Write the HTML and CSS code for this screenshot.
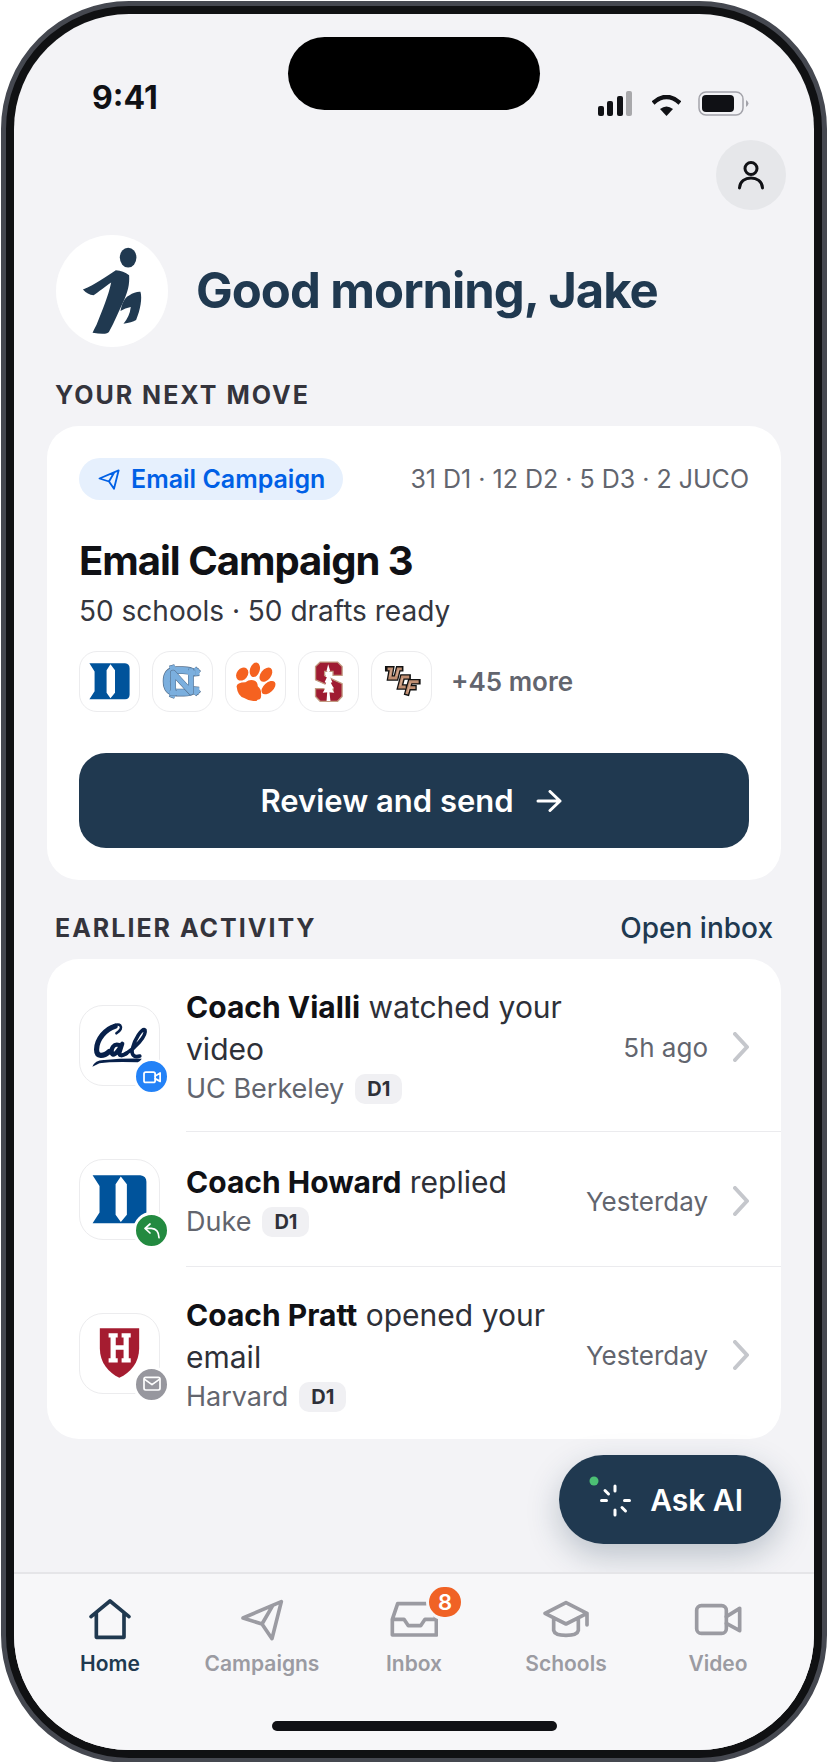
FILE: index.html
```html
<!DOCTYPE html>
<html lang="en">
<head>
<meta charset="utf-8">
<meta name="viewport" content="width=device-width, initial-scale=1">
<title>Home</title>
<link rel="stylesheet" href="styles.css">
</head>
<body>
<svg class="defs" aria-hidden="true">
  <symbol id="i-plane" viewBox="0 0 144 144"><path d="M15 69 130 20 102 131 72 87ZM72 87 104 32"/></symbol>
  <symbol id="i-video" viewBox="0 0 144 144"><rect x="8" y="32" width="89" height="83" rx="14"/><path d="M97 65 137 40V107L97 85"/></symbol>
  <symbol id="i-chevron" viewBox="0 0 16 30"><path d="M2 2 14 15 2 28"/></symbol>
  <symbol id="l-duke" viewBox="0 0 182 182"><path fill="#00539b" fill-rule="evenodd" d="M29 35H139Q153 37 153 50V132Q153 145 139 146H29L45 121V60ZM94 38 82 56V126L94 143 108 126V56Z"/></symbol>
</svg>
<div class="phone">
  <div class="screen">
    <header class="status">
      <span class="time">9:41</span>
      <span class="island"></span>
      <span class="indicators">
        <svg class="signal" viewBox="0 0 34 25" aria-hidden="true"><g fill="#101115"><rect y="15" width="6" height="10" rx="2"/><rect x="9" y="10" width="6" height="15" rx="2"/><rect x="19" y="5" width="6" height="20" rx="2"/></g><rect x="28" width="6" height="25" rx="2" fill="#a8a8ab"/></svg>
        <svg class="wifi" viewBox="0 0 29 21" aria-hidden="true"><path d="M1 8Q14.500-4 28 8" fill="none" stroke="#101115" stroke-width="4.500"/><path d="M8 14Q14.500 9 21 14L14.500 21Z" fill="#101115"/></svg>
        <svg class="battery" viewBox="0 0 51 25" aria-hidden="true"><rect x="1" y="1" width="44" height="23" rx="7" fill="none" stroke="#a3a3aa" stroke-width="1.500"/><rect x="4" y="4" width="32" height="17" rx="4" fill="#101115"/><path d="M48 9Q53 12.500 48 16Z" fill="#a3a3aa"/></svg>
      </span>
    </header>

    <div class="topbar">
      <button class="profile" aria-label="Profile">
        <svg viewBox="0 0 28 30" aria-hidden="true"><circle cx="14" cy="8.500" r="6"/><path d="M2.500 28C3 14.500 25 14.500 25.500 28"/></svg>
      </button>
    </div>

    <main>
      <div class="greeting">
        <span class="avatar"><svg viewBox="0 0 337 337" aria-hidden="true"><ellipse cx="217" cy="68" rx="25" ry="30"/><path d="M81 164C120 148 150 125 180 106Q203 107 220 121C222 150 215 172 206 193C188 230 176 262 160 290Q155 302 110 294Q114 285 122 270C140 225 157 185 166 143C148 155 128 172 113 181Q95 180 81 164Z"/><path d="M194 229C198 205 208 187 220 182Q238 170 254 171C260 190 254 225 241 256Q228 264 203 267Q222 245 225 217Q208 220 194 229Z"/></svg></span>
        <h1>Good morning, Jake</h1>
      </div>

      <div class="section-head"><h2>YOUR NEXT MOVE</h2></div>
      <section class="card campaign">
        <div class="campaign-top">
          <span class="pill"><svg class="line" aria-hidden="true"><use href="#i-plane"/></svg>Email Campaign</span>
          <span class="divisions">31 D1 · 12 D2 · 5 D3 · 2 JUCO</span>
        </div>
        <h3>Email Campaign 3</h3>
        <p class="summary">50 schools · 50 drafts ready</p>
        <div class="schools">
          <span class="tile"><svg role="img" aria-label="Duke"><use href="#l-duke"/></svg></span>
          <span class="tile"><svg viewBox="0 0 182 182" role="img" aria-label="North Carolina">
            <g fill="none" stroke-linejoin="round">
              <path stroke="#526b87" stroke-width="24" d="M142 62 125 64Q115 56 92 56H72Q42 58 42 90Q42 122 72 125H95Q115 125 125 118L142 119"/>
              <path stroke="#526b87" stroke-width="18" d="M127 51 142 65M127 130 142 116M52 51 68 46M52 130 68 136"/>
              <path stroke="#7bafde" stroke-width="20" d="M142 62 125 64Q115 56 92 56H72Q42 58 42 90Q42 122 72 125H95Q115 125 125 118L142 119"/>
              <path stroke="#7bafde" stroke-width="14" d="M127 51 142 65M127 130 142 116M52 51 68 46M52 130 68 136"/>
              <path stroke="#526b87" stroke-width="18" d="M62 134V64L117 124V52M108 64H130M52 126H74"/>
              <path stroke="#7bafde" stroke-width="15" d="M62 134V64L117 124V52M108 64H130M52 126H74"/>
            </g></svg></span>
          <span class="tile"><svg viewBox="0 0 182 182" role="img" aria-label="Clemson"><g fill="#f56220"><ellipse cx="50" cy="68" rx="17" ry="22" transform="rotate(38 50 68)"/><ellipse cx="89" cy="55" rx="15" ry="23" transform="rotate(18 89 55)"/><ellipse cx="123" cy="70" rx="16" ry="25" transform="rotate(38 123 70)"/><ellipse cx="131" cy="110" rx="15" ry="26" transform="rotate(48 131 110)"/><path d="M33 108Q30 94 60 93Q72 84 84 87Q98 90 98 106Q110 116 108 130Q110 140 104 146Q96 146 94 151H84Q68 150 56 142Q36 136 33 108Z"/></g></svg></span>
          <span class="tile"><svg viewBox="0 0 182 182" role="img" aria-label="Stanford"><path d="M65 31H119L133 45V72H105V60H79V73L133 98V137L119 152H65L51 137V113H79V122H105V110L51 86V45Z" fill="#9f1b32" stroke="#c19a80" stroke-width="4"/><path d="M90 38 96 58 93 60 100 76 96 78 103 93 98 95 107 112 100 113 109 126 94 124 97 151H85L87 124 73 126 81 113 76 112 84 95 79 93 86 78 82 76 88 60 85 58Z" fill="#fff"/></svg></span>
          <span class="tile"><svg viewBox="0 0 182 182" role="img" aria-label="UCF"><g fill="none" stroke-linejoin="miter"><path stroke="#111" stroke-width="17" d="M40 52H60L55 80H74L81 52H97M120 77H94L86 108H108M150 92H118L106 134M114 110H138"/><path stroke="#c08f73" stroke-width="9" d="M48 52H60L55 80H74L81 52H92M115 77H94L86 108H104M144 92H118L107 130M114 110H134"/><path stroke="#e8c4ac" stroke-width="2" d="M60 54 55 76M82 54 76 74M94 80 87 104M118 95 111 124"/></g></svg></span>
          <span class="more">+45 more</span>
        </div>
        <button class="review">Review and send<svg viewBox="0 0 26 22" aria-hidden="true"><path d="M2 11H24M14 1.500 24 11 14 20.500"/></svg></button>
      </section>

      <div class="section-head"><h2>EARLIER ACTIVITY</h2><a href="#inbox">Open inbox</a></div>
      <ul class="card activity">
        <li>
          <span class="logo"><svg viewBox="0 0 243 243" role="img" aria-label="Cal"><g fill="none" stroke="#07204a" stroke-linecap="round"><path stroke-width="8" d="M112 84Q132 70 124 60Q118 54 105 60"/><path stroke-width="16" d="M108 62C78 70 51 104 51 134C51 158 72 156 90 140"/><path stroke-width="13" d="M120 120C104 114 94 132 98 146Q104 158 122 130M130 116 121 144Q122 158 142 146"/><path stroke-width="11" d="M142 146C166 132 206 92 200 74C190 66 168 104 162 128C156 150 166 160 184 154"/></g><path fill="#07204a" d="M38 187Q46 165 75 166 130 161 190 162 185 170 178 173 100 170 60 176Z"/></svg>
            <span class="badge badge-video"><svg class="line" aria-hidden="true"><use href="#i-video"/></svg></span></span>
          <div class="row">
            <div class="text"><p><b>Coach Vialli</b> watched your video</p><span class="school">UC Berkeley <span class="chip">D1</span></span></div>
            <time>5h ago</time><svg class="chevron" aria-hidden="true"><use href="#i-chevron"/></svg>
          </div>
        </li>
        <li>
          <span class="logo"><svg role="img" aria-label="Duke"><use href="#l-duke"/></svg>
            <span class="badge badge-reply"><svg class="line" viewBox="0 0 60 60" aria-hidden="true"><path d="M24 9 9 22 24 36M10 22H28Q50 23 51 50"/></svg></span></span>
          <div class="row">
            <div class="text"><p><b>Coach Howard</b> replied</p><span class="school">Duke <span class="chip">D1</span></span></div>
            <time>Yesterday</time><svg class="chevron" aria-hidden="true"><use href="#i-chevron"/></svg>
          </div>
        </li>
        <li>
          <span class="logo"><svg viewBox="0 0 243 243" role="img" aria-label="Harvard"><path fill="#a51c30" d="M61 44H182V105C182 150 155 180 121 196C88 180 61 150 61 105Z"/><path fill="#fff" d="M88 59H116V72H110V96H134V72H128V59H156V72H150V136H156V149H128V136H134V110H110V136H116V149H88V136H94V72H88Z"/></svg>
            <span class="badge badge-mail"><svg class="line" viewBox="0 0 60 60" aria-hidden="true"><rect x="6" y="10" width="48" height="38" rx="5"/><path d="M8 16 30 32 52 16"/></svg></span></span>
          <div class="row">
            <div class="text"><p><b>Coach Pratt</b> opened your email</p><span class="school">Harvard <span class="chip">D1</span></span></div>
            <time>Yesterday</time><svg class="chevron" aria-hidden="true"><use href="#i-chevron"/></svg>
          </div>
        </li>
      </ul>
    </main>

    <div class="ask-wrap">
      <button class="ask"><svg viewBox="0 0 44 44" aria-hidden="true"><circle cx="5" cy="7" r="4.500" fill="#4cc074"/><path d="M26 12V17M26 36V41M12.500 26.500H17.500M35.500 26.500H40.500M16 16.500 19.500 20M33 33.500 36.500 37"/></svg>Ask AI</button>
    </div>

    <nav class="tabs">
      <a class="tab active" href="#home"><svg class="line" viewBox="0 0 144 144" aria-hidden="true"><path d="M15 65 72 18 129 65M31 55V127H114V55"/></svg>Home</a>
      <a class="tab" href="#campaigns"><svg class="line" aria-hidden="true"><use href="#i-plane"/></svg>Campaigns</a>
      <a class="tab" href="#inbox"><span class="tab-icon"><svg class="line" viewBox="0 0 144 144" aria-hidden="true"><path d="M7 73V120H139V73H105L92 92H55L42 73ZM7 73 23 26H123L139 73"/></svg><span class="count">8</span></span>Inbox</a>
      <a class="tab" href="#schools"><svg class="line" viewBox="0 0 144 144" aria-hidden="true"><path d="M72 23 135 55 72 87 9 55ZM35 68V106Q38 121 72 121 106 121 109 106V68M135 55V90"/></svg>Schools</a>
      <a class="tab" href="#video"><svg class="line" aria-hidden="true"><use href="#i-video"/></svg>Video</a>
      <span class="home-bar"></span>
    </nav>
  </div>
</div>
</body>
</html>
```
FILE: styles.css
```css
* { box-sizing: border-box; }
body {
  margin: 0;
  padding: 1px;
  background: #fff;
  color: #101115;
  font-family: Inter, "Liberation Sans", sans-serif;
}
h1, h2, h3, p, ul { margin: 0; padding: 0; }
button { border: 0; font: inherit; cursor: pointer; }
a { text-decoration: none; }
svg { display: block; flex: none; }
.defs { position: absolute; width: 0; height: 0; }
.line { fill: none; stroke: currentColor; stroke-width: 11; stroke-linecap: round; stroke-linejoin: round; }

.phone {
  display: flex;
  min-height: calc(100vh - 2px);
  border: 5px solid #454850;
  border-radius: 128px;
  background: #101113;
  padding: 8px;
}
.screen {
  flex: 1;
  min-width: 0;
  display: flex;
  flex-direction: column;
  border-radius: 115px;
  overflow: hidden;
  background: #f3f3f6;
}

.status {
  display: grid;
  grid-template-columns: 1fr 252px 1fr;
  align-items: end;
  height: 102px;
  padding-top: 23px;
}
.time { padding-left: 78px; font-size: 32px; line-height: 36px; font-weight: 700; }
.island { align-self: start; height: 73px; border-radius: 37px; background: #000; }
.indicators { display: flex; justify-content: flex-end; align-items: flex-end; padding-right: 65px; }
.signal { width: 34px; height: 25px; margin-right: 20px; }
.wifi { width: 29px; height: 21px; margin-right: 17px; }
.battery { width: 51px; height: 25px; }

.topbar { display: flex; justify-content: flex-end; padding: 24px 28px 0; }
.profile {
  display: grid;
  place-items: center;
  width: 70px;
  height: 70px;
  padding: 0;
  border-radius: 50%;
  background: #e6e7ea;
}
.profile svg { width: 28px; height: 30px; fill: none; stroke: #101115; stroke-width: 3; stroke-linecap: round; }

main { padding: 25px 33px 16px; }
.greeting { display: flex; align-items: center; gap: 28px; padding-left: 9px; }
.avatar { width: 112px; height: 112px; border-radius: 50%; background: #fff; fill: #203950; }
.greeting h1 { font-size: 49px; line-height: 56px; font-weight: 700; letter-spacing: -1px; color: #203950; }

.section-head {
  display: flex;
  justify-content: space-between;
  align-items: center;
  margin: 32px 8px 15px;
  line-height: 32px;
}
.section-head h2 { font-size: 25px; font-weight: 700; letter-spacing: 2px; color: #34343c; }
.section-head a { font-size: 28px; font-weight: 500; color: #203950; }

.card { border-radius: 32px; background: #fff; }
.campaign { padding: 32px; }
.campaign-top { display: flex; justify-content: space-between; align-items: center; gap: 16px; }
.pill {
  display: flex;
  align-items: center;
  gap: 10px;
  height: 42px;
  padding: 0 18px;
  border-radius: 21px;
  background: #e6f0fd;
  color: #0060e6;
  font-size: 25px;
  font-weight: 600;
  white-space: nowrap;
}
.pill svg { width: 24px; height: 24px; }
.divisions { font-size: 25px; color: #62656e; white-space: nowrap; }
.campaign h3 { margin-top: 37px; font-size: 40px; line-height: 48px; font-weight: 700; letter-spacing: -1px; }
.summary { margin-top: 8px; font-size: 28px; line-height: 36px; color: #34363e; }
.schools { display: flex; align-items: center; gap: 12px; margin-top: 22px; }
.tile { width: 61px; height: 61px; border: 1px solid #ececee; border-radius: 18px; }
.tile svg { width: 100%; height: 100%; }
.more { margin-left: 7px; font-size: 26px; font-weight: 600; color: #62656e; }
.review {
  display: flex;
  justify-content: center;
  align-items: center;
  gap: 22px;
  width: 100%;
  height: 95px;
  margin-top: 41px;
  padding: 0 12px 0 6px;
  border-radius: 27px;
  background: #203950;
  color: #fff;
  font-size: 31px;
  font-weight: 600;
}
.review svg { width: 26px; height: 22px; fill: none; stroke: #fff; stroke-width: 3; stroke-linecap: round; stroke-linejoin: round; }

.activity { list-style: none; }
.activity li { display: flex; align-items: center; gap: 26px; padding-left: 32px; }
.logo { position: relative; flex: none; width: 81px; height: 81px; border: 1px solid #ececee; border-radius: 24px; }
.logo > svg { width: 100%; height: 100%; }
.badge {
  position: absolute;
  right: -11px;
  bottom: -10px;
  display: grid;
  place-items: center;
  width: 37px;
  height: 37px;
  border: 3px solid #fff;
  border-radius: 50%;
  color: #fff;
}
.badge svg { width: 20px; height: 20px; stroke-width: 5; }
.badge-video { background: #2382f7; }
.badge-video svg { width: 18px; height: 18px; stroke-width: 14; }
.badge-reply { background: #238a40; }
.badge-mail { background: #97979e; }
.row {
  flex: 1;
  min-width: 0;
  min-height: 135px;
  display: flex;
  align-items: center;
  padding: 27px 32px 23px 0;
  border-bottom: 1px solid #ebebee;
}
li:last-child .row { border-bottom: 0; }
.text { flex: 1; min-width: 0; }
.text p { font-size: 30px; line-height: 42px; color: #2e3038; }
.text b { font-weight: 700; color: #101115; }
.school { display: flex; align-items: center; gap: 11px; line-height: 38px; font-size: 27px; color: #62656e; }
.chip { padding: 0 12px; border-radius: 10px; background: #f0f0f3; font-size: 20px; line-height: 30px; font-weight: 700; color: #2e3038; }
.row time { margin-left: 12px; font-size: 26px; color: #62656e; white-space: nowrap; }
.chevron { width: 16px; height: 30px; margin-left: 25px; fill: none; stroke: #c5c7cc; stroke-width: 4; stroke-linecap: round; stroke-linejoin: round; }

.ask-wrap { display: flex; justify-content: flex-end; margin-top: auto; padding: 0 33px 28px; }
.ask {
  display: flex;
  align-items: center;
  gap: 17px;
  height: 89px;
  padding: 0 38px 0 30px;
  border-radius: 45px;
  background: #203950;
  box-shadow: 0 12px 32px rgba(32, 57, 80, .26);
  color: #fff;
  font-size: 30px;
  font-weight: 600;
}
.ask svg { width: 44px; height: 44px; margin-bottom: 8px; fill: none; stroke: #fff; stroke-width: 3; stroke-linecap: round; }
.ask circle { stroke: none; }

.tabs {
  position: relative;
  display: grid;
  grid-template-columns: repeat(5, 1fr);
  height: 178px;
  padding: 21px 20px 0;
  border-top: 2px solid #e5e5e8;
  background: #f7f7f9;
}
.tab { display: flex; flex-direction: column; align-items: center; gap: 8px; height: 82px; font-size: 21px; line-height: 26px; font-weight: 600; color: #9b9ba2; }
.tab svg { width: 48px; height: 48px; }
.tab.active { color: #203950; }
.tab-icon { position: relative; }
.count {
  position: absolute;
  top: -11px;
  right: -26px;
  width: 38px;
  height: 36px;
  border: 3px solid #f7f7f9;
  border-radius: 18px;
  background: #f06225;
  color: #fff;
  font-size: 22px;
  line-height: 30px;
  text-align: center;
}
.home-bar { grid-column: 1 / -1; justify-self: center; width: 285px; height: 10px; margin-top: 24px; border-radius: 5px; background: #101115; }
```
